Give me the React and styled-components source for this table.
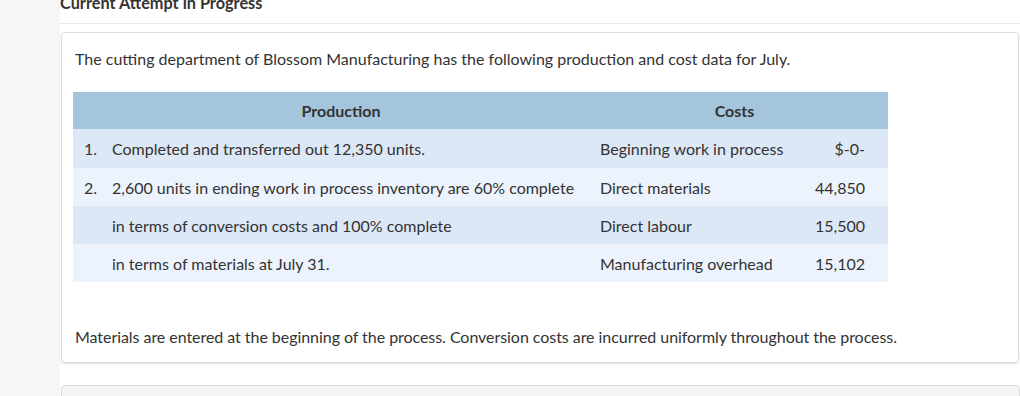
import styled, { createGlobalStyle } from "styled-components";

const GlobalStyle = createGlobalStyle`
    html, body {
        margin: 0;
        padding: 0;
        background: #f6f6f6;
        font-family: Lato, "Open Sans", sans-serif;
        color: #333;
    }
`

const productionRows = [
    { num: "1.", text: "Completed and transferred out 12,350 units.", label: "Beginning work in process", amount: "$-0-" },
    { num: "2.", text: "2,600 units in ending work in process inventory are 60% complete", label: "Direct materials", amount: "44,850" },
    { num: "", text: "in terms of conversion costs and 100% complete", label: "Direct labour", amount: "15,500" },
    { num: "", text: "in terms of materials at July 31.", label: "Manufacturing overhead", amount: "15,102" },
]

const App = () => {
    return (
        <Page>
            <GlobalStyle />
            <Main>
                <Title>Current Attempt in Progress</Title>
                <Card>
                    <Intro>The cutting department of Blossom Manufacturing has the following production and cost data for July.</Intro>
                    <DataTable>
                        <colgroup>
                            <col style={{ width: 39 }} />
                            <col style={{ width: 479 }} />
                            <col style={{ width: 205 }} />
                            <col style={{ width: 92 }} />
                        </colgroup>
                        <thead>
                            <tr>
                                <HeadCell colSpan={2} className="production">Production</HeadCell>
                                <HeadCell colSpan={2} className="costs">Costs</HeadCell>
                            </tr>
                        </thead>
                        <tbody>
                            {productionRows.map((row, i) => (
                                <Row key={i} $odd={i % 2 === 0}>
                                    <td className="num">{row.num}</td>
                                    <td className="text">{row.text}</td>
                                    <td className="label">{row.label}</td>
                                    <td className="amount">{row.amount}</td>
                                </Row>
                            ))}
                        </tbody>
                    </DataTable>
                    <Note>Materials are entered at the beginning of the process. Conversion costs are incurred uniformly throughout the process.</Note>
                </Card>
                <NextCard />
            </Main>
        </Page>
    )
}

const Page = styled.div`
    display: flex;
    padding-left: 60px;
    height: 396px;
    overflow: hidden;
`

const Main = styled.div`
    flex: 1;
    background: #fff;
    display: flex;
    flex-direction: column;
`

const Title = styled.div`
    flex-shrink: 0;
    font-size: 16.3px;
    font-weight: 700;
    color: #333;
    line-height: 20px;
    margin-top: -7px;
    padding-bottom: 10px;
    border-bottom: 1px solid #ebebeb;
`

const Card = styled.div`
    flex-shrink: 0;
    margin: 8px 1px 0 1px;
    border: 1px solid #dcdcdc;
    border-radius: 4px;
    box-shadow: 0 1px 2px rgba(0, 0, 0, 0.12);
    padding: 12px 15px 14px 13px;
    height: 331px;
    box-sizing: border-box;
`

const Intro = styled.p`
    margin: 0;
    font-size: 16px;
    line-height: 28px;
`

const DataTable = styled.table`
    margin: 19px 0 0 -2px;
    border-collapse: collapse;
    table-layout: fixed;
    width: 815px;
    font-size: 16px;
    td {
        height: 38px;
        padding: 0;
        white-space: nowrap;
    }
    tbody tr:first-child td {
        height: 39px;
    }
    .num {
        padding-left: 11px;
    }
    .label {
        padding-left: 9px;
    }
    .amount {
        text-align: right;
        padding-right: 23px;
    }
`

const HeadCell = styled.th`
    height: 37px;
    padding: 0;
    background: #a5c5dd;
    font-weight: 700;
    font-size: 16px;
    color: #333;
    text-align: center;
    &.production {
        padding-left: 18px;
    }
    &.costs {
        padding-right: 10px;
    }
`

const Row = styled.tr`
    background: ${props => props.$odd ? "#dde8f7" : "#ecf3fd"};
`

const Note = styled.p`
    margin: 45px 0 0 0;
    font-size: 16px;
    line-height: 20px;
    letter-spacing: -0.05px;
`

const NextCard = styled.div`
    flex-shrink: 0;
    margin: 22px 0 0 1px;
    height: 40px;
    border: 1px solid #dcdcdc;
    border-radius: 4px;
    background: #f4f4f4;
`

export default App
